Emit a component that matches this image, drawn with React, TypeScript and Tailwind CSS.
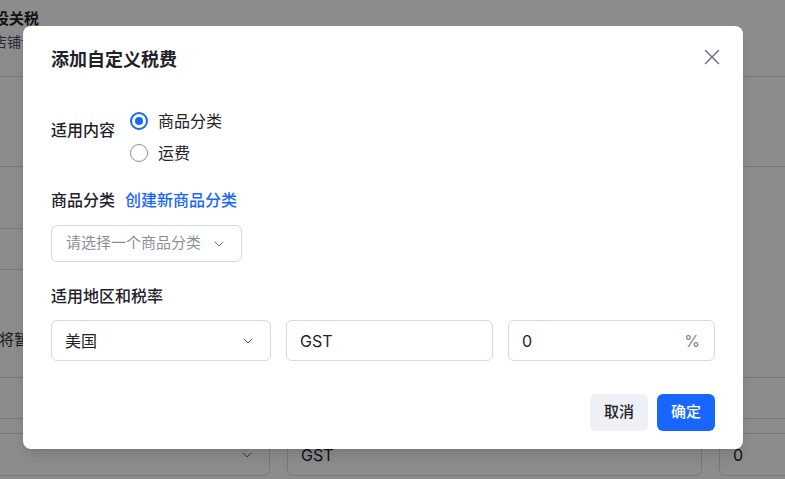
import React, { useState } from 'react';
import { ChevronDown } from 'lucide-react';

const Radio: React.FC<{ checked: boolean; label: string; onClick: () => void }> = ({ checked, label, onClick }) => (
  <label onClick={onClick} className="flex h-8 cursor-pointer items-center gap-[10px]">
    {checked ? (
      <span className="flex h-[18px] w-[18px] items-center justify-center rounded-full border-2 border-[#1966ff]">
        <span className="h-2 w-2 rounded-full bg-[#1966ff]" />
      </span>
    ) : (
      <span className="h-[18px] w-[18px] rounded-full border-[1.5px] border-[#8b91a0]" />
    )}
    <span className="text-[16px] leading-6 text-[#1f2329]">{label}</span>
  </label>
);

const App: React.FC = () => {
  const [scope, setScope] = useState<'category' | 'shipping'>('category');

  return (
    <div className="relative h-[479px] w-[785px] overflow-hidden bg-white font-[Inter,'Noto_Sans_CJK_SC',sans-serif] text-[#1f2329]">
      {/* page behind the dialog */}
      <div className="-ml-[21px] w-[960px]">
        <div className="h-[77px] border-b border-[#d9dbe2] pt-[8px]">
          <div className="text-[15px] font-semibold leading-[22px]">预设关税</div>
          <div className="mt-[2px] text-[14px] leading-[20px] text-[#4b5060]">为店铺设置关税</div>
        </div>
        <div className="h-[90px] border-b border-[#d9dbe2]" />
        <div className="pt-[61px]">
          <div className="h-[42px] w-[600px] rounded-md border border-[#d9dbe2]" />
          <div className="ml-[20px] mt-[59px] text-[15px] leading-[22px] text-[#2a2e38]">将暂停</div>
          <div className="mt-[26px] h-px bg-[#d9dbe2]" />
          <div className="mt-[40px] h-px bg-[#d9dbe2]" />
          <div className="mt-[14px] flex gap-[17px]">
            <div className="flex h-[43px] w-[291px] shrink-0 items-center justify-end rounded-md border border-[#d9dbe2] pr-[14px]">
              <ChevronDown size={16} strokeWidth={1.5} className="text-[#6b7280]" />
            </div>
            <div className="flex h-[43px] w-[415px] shrink-0 items-center rounded-md border border-[#d9dbe2] pl-[13px] text-[16px]">GST</div>
            <div className="flex h-[43px] w-[200px] shrink-0 items-center rounded-md border border-[#d9dbe2] pl-[13px] text-[16px]">0</div>
          </div>
        </div>
      </div>

      {/* overlay + dialog */}
      <div className="absolute inset-0 bg-black/45">
        <div className="absolute left-[23px] top-[26px] w-[720px] rounded-lg bg-white px-7 pb-[18px] pt-[21px] shadow-lg">
          <div className="flex items-center justify-between">
            <h2 className="text-[18px] font-semibold leading-[26px]">添加自定义税费</h2>
            <button className="-mr-[5px] -mt-[7px] text-[#6b7385]">
              <svg width="16" height="16" viewBox="0 0 16 16" fill="none" stroke="currentColor" strokeWidth="1.5" strokeLinecap="round">
                <path d="M1.5 1.5l13 13M14.5 1.5l-13 13" />
              </svg>
            </button>
          </div>

          <div className="mt-[32px] flex">
            <div className="w-[79px] pt-[13px] text-[16px] font-medium leading-6">适用内容</div>
            <div className="flex flex-col">
              <Radio checked={scope === 'category'} label="商品分类" onClick={() => setScope('category')} />
              <Radio checked={scope === 'shipping'} label="运费" onClick={() => setScope('shipping')} />
            </div>
          </div>

          <div className="mt-[19px] flex items-center gap-[10px] text-[16px] font-medium leading-6">
            <span>商品分类</span>
            <a className="cursor-pointer text-[#1966ff]">创建新商品分类</a>
          </div>

          <button className="mt-[13px] flex h-[37px] w-[191px] items-center justify-between rounded-md border border-[#d3d8e2] pl-[14px] pr-[14px] text-[15px] text-[#8a8f99]">
            <span>请选择一个商品分类</span>
            <ChevronDown size={16} strokeWidth={1.5} className="text-[#6b7280]" />
          </button>

          <div className="mt-[22px] text-[16px] font-medium leading-6">适用地区和税率</div>

          <div className="mt-[12px] grid grid-cols-[220px_1fr_1fr] gap-[15px]">
            <div className="flex h-[41px] items-center justify-between rounded-md border border-[#d3d8e2] pl-[13px] pr-[14px] text-[16px]">
              <span>美国</span>
              <ChevronDown size={16} strokeWidth={1.5} className="text-[#4b5060]" />
            </div>
            <div className="flex h-[41px] items-center rounded-md border border-[#d3d8e2] px-[13px] text-[16px]">GST</div>
            <div className="flex h-[41px] items-center justify-between rounded-md border border-[#d3d8e2] pl-[13px] pr-[14px] text-[16px]">
              <span>0</span>
              <span className="text-[#7a8090]">%</span>
            </div>
          </div>

          <div className="mt-[33px] flex justify-end gap-[9px]">
            <button className="h-[37px] w-[58px] rounded-md bg-[#eef0f5] text-[15px] font-medium">取消</button>
            <button className="h-[37px] w-[58px] rounded-md bg-[#1966ff] text-[15px] font-medium text-white">确定</button>
          </div>
        </div>
      </div>
    </div>
  );
};

export default App;
